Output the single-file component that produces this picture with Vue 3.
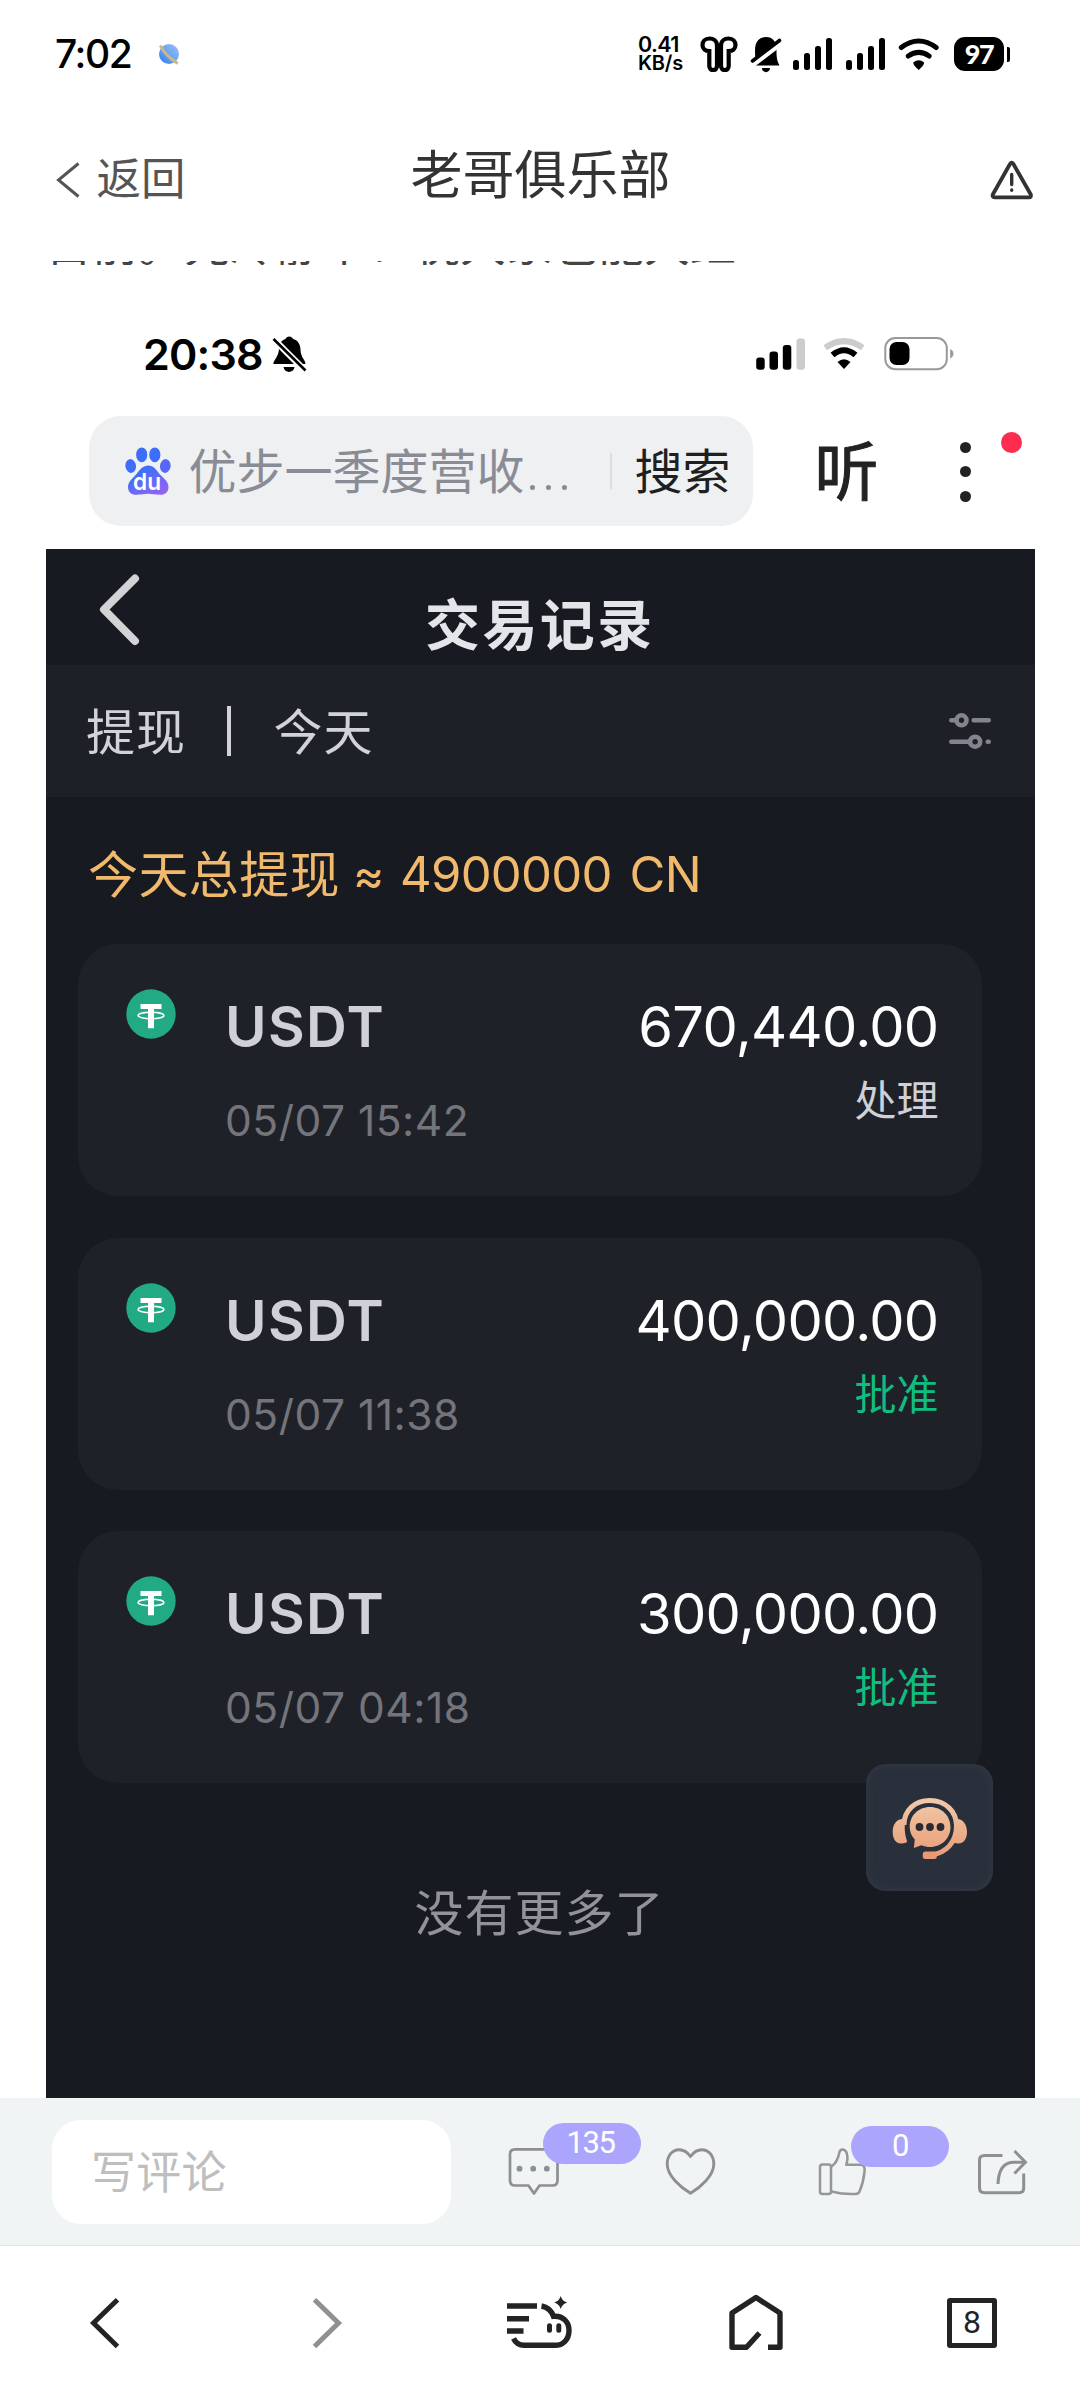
<script setup>
const records = [
  { coin: 'USDT', time: '05/07 15:42', amount: '670,440.00', status: '处理', approved: false },
  { coin: 'USDT', time: '05/07 11:38', amount: '400,000.00', status: '批准', approved: true },
  { coin: 'USDT', time: '05/07 04:18', amount: '300,000.00', status: '批准', approved: true },
]
</script>

<template>
  <div class="screen">
    <div class="status">
      <span class="clock">7:02</span>
      <svg class="planet" width="22" height="22" viewBox="158 43 22 22">
        <defs>
          <linearGradient id="globe" x1="1" y1="0" x2="0" y2="1">
            <stop offset="0" stop-color="#a3bdf8" />
            <stop offset="0.5" stop-color="#6aa5f6" />
            <stop offset="1" stop-color="#2f74ec" />
          </linearGradient>
        </defs>
        <circle cx="169" cy="54" r="10" fill="url(#globe)" />
        <path d="M160.200 45.500Q165.500 56 177.800 63.500" fill="none" stroke="#cdb87f" stroke-width="2.800" />
      </svg>
      <div class="speed"><span class="rate">0.41</span><span class="unit">KB/s</span></div>
      <svg class="buds" width="38" height="36" viewBox="699.500 36.500 38 36" fill="none" stroke="#000" stroke-width="4.200">
        <path d="M716.500 46C716.500 41.500 713 39 709 39C704.500 39 702 42 702 45.500C702 49.500 705 51.500 708.800 51.500V66.500a3.850 4.200 0 0 0 7.700 0Z" />
        <path d="M720.500 46C720.500 41.500 724 39 728 39C732.500 39 735 42 735 45.500C735 49.500 732 51.500 728.200 51.500V66.500a3.850 4.200 0 0 1-7.700 0Z" />
      </svg>
      <svg class="mute" width="32" height="38" viewBox="750 35.500 32 38">
        <path d="M754.500 66C756 62 755 58 755 51C755 42 759 37.500 766 37.500C773 37.500 776.500 42 776.500 51C776.500 58 777 61 779.500 66Z" />
        <path d="M762 68.500H770C770 74 762 74 762 68.500Z" />
        <path d="M750 67.500L782 43" stroke="#fff" stroke-width="5" />
        <path d="M752.500 61.500L779.500 41" stroke="#000" stroke-width="3.600" stroke-linecap="round" />
      </svg>
      <svg v-for="n in 2" :key="n" class="bars" :class="'bars' + n" width="39" height="32" viewBox="793 38 39 32">
        <rect x="793" y="60" width="6" height="10" rx="2.500" />
        <rect x="804" y="53" width="6" height="17" rx="2.500" />
        <rect x="815" y="46" width="6" height="24" rx="2.500" />
        <rect x="826" y="38" width="6" height="32" rx="2.500" />
      </svg>
      <svg class="wifi" width="42" height="34" viewBox="898 37 42 34" fill="none" stroke="#000" stroke-width="5" stroke-linecap="round">
        <path d="M901.300 47.600Q918.700 34.500 936.200 47.600" />
        <path d="M908.300 56Q918.700 48.800 929.100 56" />
        <path d="M913.200 62.500Q918.700 58 924.200 62.500Q924 65.500 918.700 70Q913.400 65.500 913.200 62.500Z" fill="#000" stroke="none" />
      </svg>
      <div class="battery">97</div>
      <i class="nub"></i>
    </div>

    <div class="header">
      <div class="back">
        <svg width="24" height="36" viewBox="56 162 24 36" fill="none" stroke="#555" stroke-width="3">
          <path d="M78.500 163.500L58.500 180L78.500 196.500" />
        </svg>
        <span>返回</span>
      </div>
      <h1>老哥俱乐部</h1>
      <svg class="warn" width="44" height="42" viewBox="990 159 44 42" fill="none" stroke="#333" stroke-width="3.800" stroke-linecap="round" stroke-linejoin="round">
        <path d="M1010 164Q1011.700 161.500 1013.400 164L1030.800 194.500Q1031.500 197.300 1029 197.300H994.500Q992 197.300 992.800 194.500Z" />
        <path d="M1011.700 174.500V184.500M1011.700 190V190.200" stroke-width="3.400" />
      </svg>
    </div>

    <div class="snippet"><p>目前。先冷静下！祝大家也能大红</p></div>

    <div class="shot">
      <div class="ios">
        <span class="ios-time">20:38</span>
        <svg class="ios-bell" width="36" height="38" viewBox="272 335 36 38">
          <path d="M273.300 364C274 359 278.500 357 279 349C279 343 282 340 285.500 339C286.500 335.500 292 335.500 293 339C297.500 340 300.500 344 300.500 350C301 358 305 359 305.500 364Z" />
          <path d="M283.500 367H294.500C293.500 373.500 284.500 373.500 283.500 367Z" />
          <path d="M272 337.500L307 372.500" stroke="#fff" stroke-width="6.500" />
          <path d="M273.500 339L305.500 370.500" stroke="#000" stroke-width="2.600" />
        </svg>
        <svg class="ios-bars" width="49" height="32" viewBox="755.500 337.500 49 32">
          <rect x="755.700" y="357" width="8.500" height="12.200" rx="3" />
          <rect x="769" y="351" width="8.500" height="18.200" rx="3" />
          <rect x="782.300" y="344.500" width="8.500" height="24.700" rx="3" />
          <rect x="796" y="338" width="8.500" height="31.200" rx="3" fill="#ccc" />
        </svg>
        <svg class="ios-wifi" width="42" height="32" viewBox="823 338 42 32" fill="none">
          <path d="M825.200 347.800Q844 334.500 862.800 347.800" stroke="#ccc" stroke-width="6" />
          <path d="M832.500 355Q844 345.500 855.500 355" stroke="#000" stroke-width="6" />
          <path d="M837.500 362Q844 356.500 850.500 362L844 369Z" fill="#000" />
        </svg>
        <svg class="ios-battery" width="70" height="34" viewBox="883.500 337 70 34">
          <rect x="884.800" y="338" width="61.500" height="31.200" rx="10" fill="none" stroke="#999" stroke-width="2" />
          <rect x="889" y="342" width="20" height="23" rx="7" />
          <path d="M949.700 349C954 351 954 356.500 949.700 358.500Z" fill="#999" />
        </svg>
      </div>

      <div class="search-row">
        <div class="search">
          <svg class="paw" width="46" height="49" viewBox="124.500 447.500 46 49">
            <defs>
              <linearGradient id="pad" x1="0.200" y1="0" x2="0.900" y2="1">
                <stop offset="0.200" stop-color="#3f6ff8" />
                <stop offset="1" stop-color="#9a62f6" />
              </linearGradient>
            </defs>
            <ellipse cx="141.200" cy="455.300" rx="5.600" ry="7.400" fill="#3d6ef8" />
            <ellipse cx="154.300" cy="455.300" rx="5.600" ry="7.400" fill="#3d6ef8" />
            <ellipse cx="130.200" cy="466.500" rx="5.300" ry="6.900" fill="#3f6cf8" transform="rotate(-8 130.200 466.500)" />
            <ellipse cx="164.800" cy="466.500" rx="5.300" ry="6.900" fill="#5668f8" transform="rotate(8 164.800 466.500)" />
            <path d="M147.800 466C153 466 155.500 470 159 474.500C163 478.500 168 482 168 487.500C168 493 164 495.500 159.500 495.300C155 495 151 494.200 147.800 494.200C144 494.200 140.500 495 136 495.300C131.500 495.500 127.500 493 127.500 487.500C127.500 482 132.500 478.500 136 474.500C139.500 470 142.500 466 147.800 466Z" fill="url(#pad)" />
            <text x="146.500" y="490.500" text-anchor="middle" fill="#fff" font-family="Inter, sans-serif" font-weight="600" font-size="23" textLength="28" lengthAdjust="spacingAndGlyphs">du</text>
          </svg>
          <span class="query">优步一季度营收<span class="dots"><i></i><i></i><i></i></span></span>
          <i class="sep"></i>
          <span class="go">搜索</span>
        </div>
        <span class="listen">听</span>
        <div class="menu">
          <i></i><i></i><i></i>
          <b class="alert"></b>
        </div>
      </div>

      <div class="app">
        <div class="app-head">
          <svg class="chev" width="42" height="74" viewBox="99 573 42 74" fill="none" stroke="#d2d3d5" stroke-width="8" stroke-linecap="round" stroke-linejoin="round">
            <path d="M135 578.500L104 609.500L135 641" />
          </svg>
          <h2>交易记录</h2>
        </div>
        <div class="filters">
          <span>提现</span>
          <i></i>
          <span>今天</span>
          <svg width="44" height="38" viewBox="948.500 711.500 44 38" fill="none" stroke="#84848e" stroke-width="4.600" stroke-linecap="round">
            <circle cx="962" cy="719.800" r="5" />
            <path d="M951.800 719.800H955M974.200 719.800H989.200" />
            <circle cx="975.600" cy="741.200" r="5" />
            <path d="M951.800 741.200H969M988.300 741.200H989.200" />
          </svg>
        </div>
        <div class="total"><span class="zh">今天总提现</span><span class="approx">≈</span><span class="sum">4900000</span><span class="cur">CN</span></div>

        <div class="list">
          <div v-for="r in records" :key="r.time" class="card">
            <svg class="coin" width="50" height="50" viewBox="0 0 50 50">
              <circle cx="25" cy="25" r="24.700" fill="#22aa85" />
              <path d="M14.500 15H35.500V20H28V39.300H22V20H14.500Z" fill="#fff" />
              <ellipse cx="25" cy="26.500" rx="13" ry="3.200" fill="none" stroke="#fff" stroke-width="1.400" />
            </svg>
            <div class="name">
              <strong>{{ r.coin }}</strong>
              <span>{{ r.time }}</span>
            </div>
            <div class="value">
              <span class="amount">{{ r.amount }}</span>
              <span class="state" :class="{ ok: r.approved }">{{ r.status }}</span>
            </div>
          </div>
        </div>
        <p class="end">没有更多了</p>

        <div class="support">
          <svg width="78" height="66" viewBox="891 1795 78 66">
            <defs>
              <linearGradient id="peach" gradientUnits="userSpaceOnUse" x1="930" y1="1798" x2="930" y2="1860">
                <stop offset="0" stop-color="#f2c9ab" />
                <stop offset="1" stop-color="#e79a72" />
              </linearGradient>
            </defs>
            <path d="M904 1825C904 1810 915 1800.500 930 1800.500C945 1800.500 956.500 1811 956.500 1826C956.500 1842 946 1853.500 931 1855" fill="none" stroke="url(#peach)" stroke-width="5" />
            <path d="M903 1819C896 1819 892.700 1825 892.700 1832C892.700 1839 896 1843.500 901 1843.500C905 1843.500 907.300 1842.500 907 1841C904.500 1833 904.500 1828 905 1822Z" fill="url(#peach)" />
            <path d="M957 1819C963.500 1819 967 1825 967 1832C967 1839 963.500 1843.500 958.500 1843.500C955 1843.500 953 1842.500 953 1841C956 1833 956 1828 955 1822Z" fill="url(#peach)" />
            <path d="M930 1807C942 1807 950.500 1816 950.500 1827C950.500 1838 942 1847 930 1847C927 1847 924 1846.300 921.500 1845.200L913.800 1848L914.800 1839.500C911.500 1836 909.700 1832 909.700 1827C909.700 1816 918 1807 930 1807Z" fill="url(#peach)" />
            <rect x="922.800" y="1851.500" width="14" height="7.500" rx="2.500" fill="#e79a72" />
            <g fill="#2b2a30"><circle cx="919.500" cy="1827" r="3.900" /><circle cx="930" cy="1827" r="3.900" /><circle cx="940.500" cy="1827" r="3.900" /></g>
          </svg>
        </div>
      </div>
    </div>

    <div class="comment-bar">
      <div class="input">写评论</div>
      <div class="act a1">
        <svg width="54" height="50" viewBox="507 2147 54 50" fill="none" stroke="#8e8f90" stroke-width="2.700" stroke-linejoin="round">
          <path d="M515 2149.300H552.500Q557.500 2149.300 557.500 2154.300V2180.500Q557.500 2185.500 552.500 2185.500H539.500L534 2193.500L528.500 2185.500H515Q510 2185.500 510 2180.500V2154.300Q510 2149.300 515 2149.300Z" />
          <g fill="#8e8f90" stroke="none"><circle cx="519.500" cy="2168.700" r="2.900" /><circle cx="533.200" cy="2168.700" r="2.900" /><circle cx="546.800" cy="2168.700" r="2.900" /></g>
        </svg>
        <span class="badge">135</span>
      </div>
      <svg class="act a2" width="54" height="50" viewBox="664 2147 54 50" fill="none" stroke="#8e8f90" stroke-width="2.900" stroke-linejoin="round">
        <path d="M690.500 2156.500C687 2151.500 683 2149.700 679 2149.700C672 2149.700 667.200 2156 667.200 2164C667.200 2176 681 2187.500 690.500 2193.300C700 2187.500 713.800 2176 713.800 2164C713.800 2156 709 2149.700 702 2149.700C698 2149.700 694 2151.500 690.500 2156.500Z" />
      </svg>
      <div class="act a3">
        <svg width="50" height="50" viewBox="817 2147 50 50" fill="none" stroke="#959697" stroke-width="2.500" stroke-linejoin="round">
          <rect x="820" y="2164.500" width="11" height="29.500" rx="2.500" />
          <path d="M831.500 2166.500C837 2163 838.500 2157 839.500 2152C840.500 2148.500 845 2148.500 846.700 2153C848 2157.500 847.500 2161 846.300 2164.800H860.500C864.500 2164.800 865 2168 864.500 2172C863.500 2181 861.500 2187 859.500 2191.500Q858.500 2194 855.500 2194C846 2194.500 839 2193.500 831.500 2191.500" />
        </svg>
        <span class="badge low">0</span>
      </div>
      <svg class="act a4" width="53" height="50" viewBox="976 2147 53 50" fill="none" stroke="#8e8f90" stroke-width="3">
        <path d="M1002.500 2155.500H984.500Q979.500 2155.500 979.500 2160V2188Q979.500 2192.700 984.500 2192.700H1019Q1023.700 2192.700 1023.700 2188V2173.500" />
        <path d="M998 2184C998.500 2170 1004 2162.200 1014 2162.200H1024.500" />
        <path d="M1014.500 2151L1025.500 2162.200L1014.500 2173.500" />
      </svg>
    </div>

    <div class="nav">
      <svg class="n1" width="34" height="60" viewBox="88 2293 34 60" fill="none" stroke="#232323" stroke-width="5">
        <path d="M117.500 2299.700L93.500 2323L117.500 2346.500" />
      </svg>
      <svg class="n2" width="34" height="60" viewBox="310 2293 34 60" fill="none" stroke="#909090" stroke-width="5">
        <path d="M314.500 2299.700L338.500 2323L314.500 2346.500" />
      </svg>
      <svg class="n3" width="70" height="60" viewBox="505 2293 70 60" fill="none" stroke="#232323" stroke-width="5.400">
        <path d="M507 2306H537M507 2318.700H529M507 2331H523.500" />
        <path d="M541.500 2306C547.500 2307 551.500 2311 553.500 2316.300C563 2315.500 569 2322 569 2330.500C569 2339.500 563 2345.300 555 2345.300H524C518.500 2345.300 515.500 2342.500 513.500 2338.500" />
        <path d="M549.500 2325.800V2330.200M558.800 2325.800V2330.200" stroke-linecap="round" stroke-width="5" />
        <path d="M560.700 2296Q562 2301 567.200 2302.500Q562 2304 560.700 2309Q559.400 2304 554.200 2302.500Q559.400 2301 560.700 2296Z" fill="#232323" stroke="none" />
      </svg>
      <svg class="n4" width="58" height="60" viewBox="727 2293 58 60" fill="none" stroke="#232323" stroke-width="5.400" stroke-linejoin="round">
        <path d="M768 2347.300H780V2313L756 2297.500L732 2313V2347.300H746.500L759.500 2333" />
      </svg>
      <div class="tabs">8</div>
    </div>
  </div>
</template>

<style>
body { margin: 0; background: #fff; }
</style>

<style scoped>
* { box-sizing: border-box; }
h1, h2, p { margin: 0; }
svg { display: block; flex: none; }
.screen {
  width: 1080px;
  height: 2400px;
  display: flex;
  flex-direction: column;
  overflow: hidden;
  background: #fff;
  font-family: "Noto Sans CJK SC", sans-serif;
}

.status { height: 108px; display: flex; align-items: center; padding-left: 55px; font-family: Inter, sans-serif; }
.clock { width: 80px; font-size: 39px; font-weight: 500; letter-spacing: -1.4px; line-height: 48px; white-space: nowrap; }
.planet { margin-left: 23px; }
.speed { margin-left: 458px; width: 50px; display: flex; flex-direction: column; font-weight: 600; font-size: 21.500px; line-height: 19px; }
.rate { letter-spacing: -0.6px; }
.unit { font-size: 20px; letter-spacing: -0.2px; }
.buds { margin-left: 11.500px; }
.mute { margin-left: 12.500px; }
.bars { margin-left: 11px; }
.bars2 { margin-left: 14px; }
.wifi { margin-left: 13px; }
.battery { margin-left: 14px; width: 50px; height: 34px; border-radius: 11px; background: #000; color: #fff; font: 900 27px/34px Lato, sans-serif; letter-spacing: -1.500px; text-align: center; }
.nub { margin-left: 2.500px; width: 3px; height: 15px; border-radius: 0 2px 2px 0; background: #000; }

.header { height: 153px; padding: 0 46px 9px 56px; display: grid; grid-template-columns: 1fr auto 1fr; align-items: center; }
.back { display: flex; align-items: center; gap: 16.500px; color: #555; font-size: 44.500px; line-height: 60px; }
.back span { padding-bottom: 9px; }
.header h1 { margin-left: -9px; padding-bottom: 17px; font-size: 52px; font-weight: 400; line-height: 70px; color: #333; }
.warn { justify-self: end; }

.snippet { height: 4px; margin: 0 46px; overflow: hidden; }
.snippet p { margin-top: -53px; font-size: 46px; line-height: 66px; color: #444; white-space: nowrap; }

.shot { height: 1833px; margin: 0 45px 0 46px; display: flex; flex-direction: column; }
.ios { height: 151px; padding-top: 27px; padding-left: 97px; display: flex; align-items: center; }
.ios-time { width: 122px; font: 600 43px/50px Inter, sans-serif; letter-spacing: -0.8px; white-space: nowrap; }
.ios-bell { margin-left: 7px; }
.ios-bars { margin-left: 447.500px; }
.ios-wifi { margin-left: 18.500px; }
.ios-battery { margin-left: 18.500px; }

.search-row { height: 133px; padding-left: 43px; display: flex; align-items: flex-start; }
.search { width: 664px; height: 110px; border-radius: 32px; background: #eff0f2; display: flex; align-items: center; font-size: 48px; line-height: 66px; }
.paw { margin-left: 35.500px; }
.query { margin-left: 18px; width: 400px; display: flex; color: #8a8c95; padding-bottom: 6px; white-space: nowrap; }
.dots { display: flex; align-items: flex-end; gap: 10.500px; padding: 0 0 11px 5px; }
.dots i { width: 5.500px; height: 5.500px; border-radius: 50%; background: #8a8c95; }
.sep { margin-left: 21px; width: 2px; height: 36px; background: #dcdde0; }
.go { margin-left: 23px; color: #1f1f1f; padding-bottom: 6px; }
.listen { margin-left: 61.500px; width: 64px; font-size: 64px; line-height: 90px; margin-top: 6px; color: #222; -webkit-text-stroke: 1px #222; }
.menu { position: relative; margin-left: 81px; margin-top: 26px; display: flex; flex-direction: column; gap: 13.300px; }
.menu i { width: 11px; height: 11px; border-radius: 50%; background: #222; }
.alert { position: absolute; left: 41px; top: -10.500px; width: 21px; height: 21px; border-radius: 50%; background: #fe2c4f; }

.app { position: relative; flex: 1; background: #181a22; color: #d1d2d8; }
.app-head { height: 116px; padding-left: 53px; display: flex; align-items: flex-start; }
.chev { margin-top: 24px; }
.app-head h2 { margin: 32px 0 0 284px; font-size: 55px; font-weight: 700; line-height: 80px; letter-spacing: 2.400px; color: #e4e5e8; white-space: nowrap; }
.filters { height: 132px; padding-left: 40px; display: flex; align-items: center; background: #1e2028; font-size: 49px; line-height: 70px; letter-spacing: 1px; color: #d1d2da; }
.filters span { padding-bottom: 5px; }
.filters i { width: 3.500px; height: 50px; margin: 0 43px 0 41px; background: #d1d2da; }
.filters svg { margin-left: 574px; }
.total { height: 147px; padding: 40px 0 0 42px; display: flex; font-size: 50px; line-height: 76px; color: #f0b96b; white-space: nowrap; }
.zh { width: 252px; letter-spacing: 0.400px; margin-top: -4px; }
.approx, .sum, .cur { font-family: Inter, sans-serif; font-weight: 400; font-size: 49px; }
.approx { margin-left: 13px; width: 47px; font-size: 47px; }
.sum { width: 229.500px; letter-spacing: -0.700px; }
.cur { letter-spacing: -0.600px; }
.list { display: flex; flex-direction: column; gap: 41.500px; padding: 0 53px 0 32px; }
.card { height: 252px; padding: 45px 43.500px 0 47.500px; border-radius: 40px; background: #1f2129; display: flex; align-items: flex-start; font-family: Inter, sans-serif; }
.name { margin-left: 49.500px; padding-top: 3px; display: flex; flex-direction: column; }
.name strong { font-size: 56.500px; font-weight: 600; line-height: 70px; color: #d0d1d6; letter-spacing: 1.400px; }
.name span { margin-top: 29px; font-size: 42.500px; font-weight: 400; line-height: 60px; color: #74757a; letter-spacing: 0.500px; }
.value { margin-left: auto; display: flex; flex-direction: column; align-items: flex-end; padding-top: 3px; }
.amount { font-size: 56px; line-height: 70px; color: #fff; letter-spacing: -0.700px; }
.state { margin-top: 6px; font: 400 42px/60px "Noto Sans CJK SC", sans-serif; color: #d0d1d6; }
.state.ok { color: #10bd80; }
.end { margin-top: 89px; padding-right: 2px; text-align: center; font-size: 49px; letter-spacing: 1px; line-height: 76px; color: #919399; }
.support { position: absolute; left: 820px; top: 1215px; width: 127px; height: 127px; border-radius: 20px; background: #29303b; box-shadow: inset 0 0 10px #353a48; display: flex; justify-content: center; align-items: center; }

.comment-bar { height: 148px; border-bottom: 1px solid #dfe8e8; background: #f0f4f5; display: flex; align-items: center; }
.input { margin-left: 51.500px; width: 399px; height: 104px; border-radius: 29px; background: #fff; padding-left: 39.500px; font-size: 45px; line-height: 99px; color: #bebebe; letter-spacing: 0.300px; }
.act { position: relative; }
.a1 { margin-left: 56.500px; }
.a2 { margin-left: 103px; }
.a3 { margin-left: 99px; }
.a4 { margin-left: 109px; }
.badge { position: absolute; left: 36px; top: -24px; width: 98px; height: 41px; padding-right: 3px; border-radius: 21px; background: #aba5fd; color: #fff; font: 400 31px/40px Roboto, sans-serif; letter-spacing: -1.500px; text-align: center; }
.badge.low { left: 34px; top: -21px; padding-right: 0; }

.nav { height: 154px; display: flex; align-items: center; }
.n1 { margin-left: 88px; }
.n2 { margin-left: 188px; }
.n3 { margin-left: 161px; }
.n4 { margin-left: 152px; }
.tabs { margin-left: 162px; width: 50px; height: 50px; border: 5.500px solid #232323; border-radius: 3px; font: 400 32px/39px Roboto, sans-serif; color: #232323; text-align: center; }
</style>
